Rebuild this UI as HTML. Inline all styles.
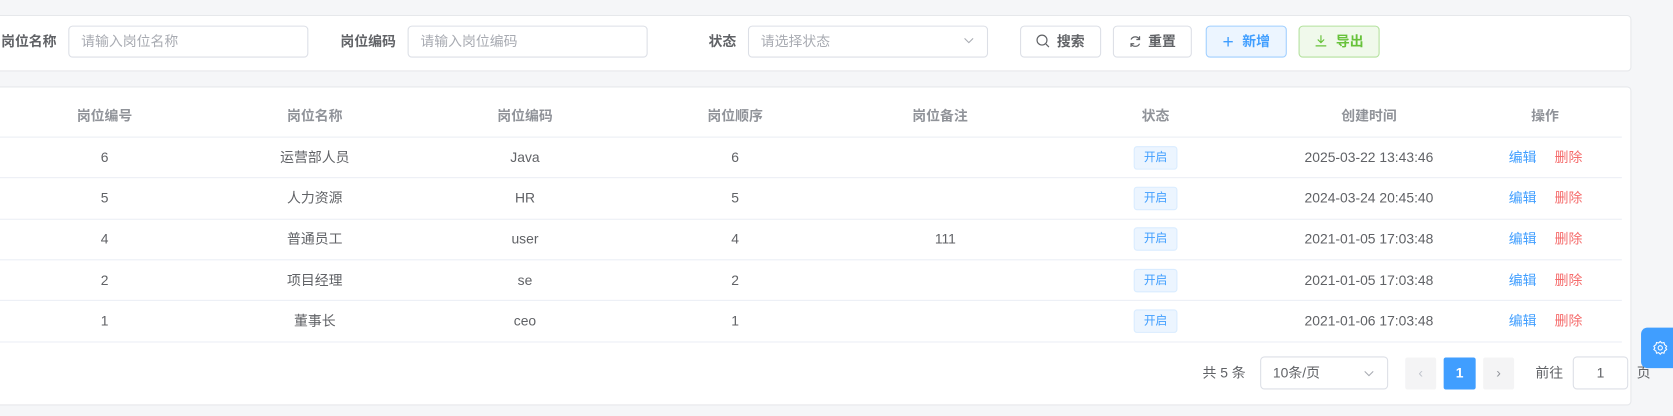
<!DOCTYPE html>
<html><head><meta charset="utf-8"><style>
*{box-sizing:border-box;margin:0;padding:0}
body{width:1673px;height:415px;background:#f5f6f8;font-family:"Liberation Sans","Noto Sans CJK SC",sans-serif;font-size:13px;color:#606266;position:relative;overflow:hidden}
#w{position:absolute;left:0;top:0;width:1568px;height:390px;transform:scale(1.067);transform-origin:0 0}
.a{position:absolute;line-height:18px}
.card{position:absolute;background:#fff;border:1px solid #e6e8eb;border-radius:4px}
.lbl{position:absolute;font-size:13px;color:#606266;font-weight:600;top:30px;line-height:18px}
.inp{position:absolute;top:24px;height:30px;border:1px solid #dcdfe6;border-radius:4px;color:#a8abb2;font-size:13px;line-height:28px;padding-left:11px}
.btn{position:absolute;top:24px;height:30px;border:1px solid #dcdfe6;border-radius:4px;font-size:13px;line-height:28px;text-align:center;color:#606266;font-weight:600}
.c{position:absolute;transform:translateX(-50%);white-space:nowrap;font-size:13px;line-height:18px}
.th{color:#909399;font-weight:700;top:100px}
.line{position:absolute;left:0;width:1520px;height:1px;background:#ebeef5}
.tag{position:absolute;transform:translateX(-50%);width:41px;height:22px;border:1px solid #d9ecff;background:#ecf5ff;color:#409eff;font-size:11px;line-height:20px;text-align:center;border-radius:3px}
</style></head><body><div id="w">
<div class="card" style="left:-5px;top:14px;width:1534px;height:53px"></div>
<div class="lbl" style="left:1px">岗位名称</div>
<div class="inp" style="left:64px;width:225px">请输入岗位名称</div>
<div class="lbl" style="left:319px">岗位编码</div>
<div class="inp" style="left:382px;width:225px">请输入岗位编码</div>
<div class="lbl" style="left:664px">状态</div>
<div class="inp" style="left:701px;width:225px">请选择状态<span style="position:absolute;right:12px;top:0;color:#a8abb2">
<svg width="10" height="10" viewBox="0 0 10 10"><path d="M1 3l4 4 4-4" fill="none" stroke="#a8abb2" stroke-width="1"/></svg></span></div>
<div class="btn" style="left:956px;width:76px"><svg width="13" height="13" viewBox="0 0 14 14" style="vertical-align:-2px;margin-right:6px"><circle cx="6" cy="6" r="5" fill="none" stroke="#606266" stroke-width="1.2"/><path d="M10 10l3 3" stroke="#606266" stroke-width="1.2"/></svg>搜索</div>
<div class="btn" style="left:1043px;width:74px"><svg width="12" height="12" viewBox="0 0 12 12" style="vertical-align:-2px;margin-right:6px"><path d="M10 4A4.5 4.5 0 0 0 2 4M2 8a4.5 4.5 0 0 0 8 0M10 1v3H7M2 11V8h3" fill="none" stroke="#606266" stroke-width="1.1"/></svg>重置</div>
<div class="btn" style="left:1130px;width:76px;background:#ecf5ff;border-color:#a0cfff;color:#409eff"><span style="font-size:18px;font-weight:300;margin-right:8px;vertical-align:-2px">+</span>新增</div>
<div class="btn" style="left:1217px;width:76px;background:#f0f9eb;border-color:#b3e19d;color:#67c23a"><svg width="12" height="12" viewBox="0 0 12 12" style="vertical-align:-1px;margin-right:8px"><path d="M6 1v7M3 5l3 3 3-3M1 11h10" fill="none" stroke="#67c23a" stroke-width="1.1"/></svg>导出</div>

<div class="card" style="left:-5px;top:81px;width:1534px;height:299px"></div>
<div class="c th" style="left:98px">岗位编号</div>
<div class="c th" style="left:295px">岗位名称</div>
<div class="c th" style="left:492px">岗位编码</div>
<div class="c th" style="left:689px">岗位顺序</div>
<div class="c th" style="left:881px">岗位备注</div>
<div class="c th" style="left:1083px">状态</div>
<div class="c th" style="left:1283px">创建时间</div>
<div class="c th" style="left:1448px">操作</div>
<div class="line" style="top:128px"></div>
<div class="line" style="top:166px"></div>
<div class="line" style="top:205px"></div>
<div class="line" style="top:243px"></div>
<div class="line" style="top:281px"></div>
<div class="line" style="top:320px"></div>

<div class="c" style="left:98px;top:139px">6</div><div class="c" style="left:295px;top:139px">运营部人员</div><div class="c" style="left:492px;top:139px">Java</div><div class="c" style="left:689px;top:139px">6</div><div class="tag" style="left:1083px;top:137px">开启</div><div class="c" style="left:1283px;top:139px">2025-03-22 13:43:46</div><div class="c" style="left:1427px;top:139px;color:#409eff">编辑</div><div class="c" style="left:1470px;top:139px;color:#f56c6c">删除</div>
<div class="c" style="left:98px;top:177px">5</div><div class="c" style="left:295px;top:177px">人力资源</div><div class="c" style="left:492px;top:177px">HR</div><div class="c" style="left:689px;top:177px">5</div><div class="tag" style="left:1083px;top:175px">开启</div><div class="c" style="left:1283px;top:177px">2024-03-24 20:45:40</div><div class="c" style="left:1427px;top:177px;color:#409eff">编辑</div><div class="c" style="left:1470px;top:177px;color:#f56c6c">删除</div>
<div class="c" style="left:98px;top:215px">4</div><div class="c" style="left:295px;top:215px">普通员工</div><div class="c" style="left:492px;top:215px">user</div><div class="c" style="left:689px;top:215px">4</div><div class="c" style="left:886px;top:215px">111</div><div class="tag" style="left:1083px;top:213px">开启</div><div class="c" style="left:1283px;top:215px">2021-01-05 17:03:48</div><div class="c" style="left:1427px;top:215px;color:#409eff">编辑</div><div class="c" style="left:1470px;top:215px;color:#f56c6c">删除</div>
<div class="c" style="left:98px;top:254px">2</div><div class="c" style="left:295px;top:254px">项目经理</div><div class="c" style="left:492px;top:254px">se</div><div class="c" style="left:689px;top:254px">2</div><div class="tag" style="left:1083px;top:252px">开启</div><div class="c" style="left:1283px;top:254px">2021-01-05 17:03:48</div><div class="c" style="left:1427px;top:254px;color:#409eff">编辑</div><div class="c" style="left:1470px;top:254px;color:#f56c6c">删除</div>
<div class="c" style="left:98px;top:292px">1</div><div class="c" style="left:295px;top:292px">董事长</div><div class="c" style="left:492px;top:292px">ceo</div><div class="c" style="left:689px;top:292px">1</div><div class="tag" style="left:1083px;top:290px">开启</div><div class="c" style="left:1283px;top:292px">2021-01-06 17:03:48</div><div class="c" style="left:1427px;top:292px;color:#409eff">编辑</div><div class="c" style="left:1470px;top:292px;color:#f56c6c">删除</div>

<div class="a" style="left:1127px;top:341px">共 5 条</div>
<div class="a" style="left:1181px;top:334px;width:120px;height:31px;border:1px solid #dcdfe6;border-radius:4px;padding-left:11px;line-height:29px">10条/页<svg width="10" height="10" viewBox="0 0 10 10" style="position:absolute;right:12px;top:10px"><path d="M1 3l4 4 4-4" fill="none" stroke="#a8abb2"/></svg></div>
<div class="a" style="left:1317px;top:335px;width:29px;height:30px;background:#f4f4f5;border-radius:2px;color:#c0c4cc;text-align:center;line-height:30px">‹</div>
<div class="a" style="left:1353px;top:335px;width:30px;height:30px;background:#409eff;border-radius:2px;color:#fff;text-align:center;line-height:30px;font-weight:700">1</div>
<div class="a" style="left:1390px;top:335px;width:29px;height:30px;background:#f4f4f5;border-radius:2px;color:#909399;text-align:center;line-height:30px">›</div>
<div class="a" style="left:1439px;top:341px">前往</div>
<div class="a" style="left:1474px;top:334px;width:52px;height:31px;border:1px solid #dcdfe6;border-radius:4px;text-align:center;line-height:29px">1</div>
<div class="a" style="left:1534px;top:341px">页</div>
<div class="a" style="left:1538px;top:307px;width:40px;height:38px;background:#409eff;border-radius:6px 0 0 6px"><svg width="14" height="14" viewBox="0 0 14 14" style="position:absolute;left:11px;top:12px"><circle cx="7" cy="7" r="2" fill="none" stroke="#fff"/><path d="M7 1l1.5 1.5 2-.5.5 2L13 5.5 12 7l1 1.5-2 1.5-.5 2-2-.5L7 13l-1.5-1.5-2 .5-.5-2L1 8.5 2 7 1 5.5 3 4l.5-2 2 .5z" fill="none" stroke="#fff"/></svg></div>
</div></body></html>
